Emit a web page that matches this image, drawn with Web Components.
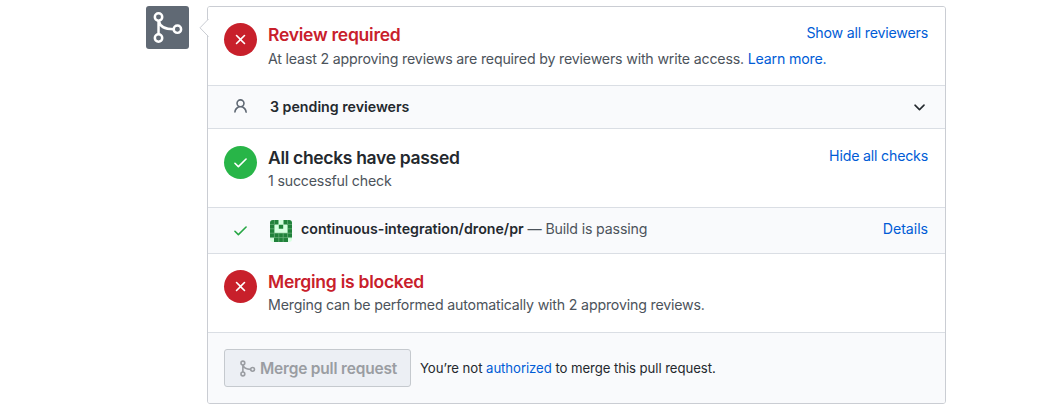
<!DOCTYPE html>
<html lang="en">
<head>
<meta charset="utf-8">
<title>Merge status</title>
<style>
body{margin:0;background:#fff;font-family:Inter,"Liberation Sans",sans-serif;color:#24292e;overflow:hidden}
</style>
</head>
<body>
<merge-page></merge-page>
<script>
const define = (name, html) => {
  const t = document.createElement('template');
  t.innerHTML = html;
  customElements.define(name, class extends HTMLElement {
    constructor() {
      super();
      this.attachShadow({mode: 'open'}).append(t.content.cloneNode(true));
    }
  });
};

const icons = {
  merge: ['0 0 16 16', '<g fill="none" stroke="currentColor" style="stroke-width:var(--stroke,1.2)"><circle cx="3.65" cy="2.9" r="1.8"/><circle cx="3.65" cy="13.1" r="1.8"/><circle cx="12.8" cy="8.8" r="1.8"/><path d="M3.65 4.7v6.600M3.750 4.700c.4 2.500 3 4.100 7.250 4.100"/></g>'],
  x: ['0 0 16 16', '<path fill="currentColor" d="M3.72 3.72a.75.75 0 011.06 0L8 6.94l3.22-3.22a.75.75 0 111.06 1.06L9.06 8l3.22 3.22a.75.75 0 11-1.06 1.06L8 9.06l-3.22 3.22a.75.75 0 01-1.06-1.06L6.94 8 3.72 4.78a.75.75 0 010-1.06z"/>'],
  check: ['0 0 16 16', '<path fill="currentColor" d="M13.78 4.22a.75.75 0 010 1.06l-7.25 7.25a.75.75 0 01-1.06 0L2.22 9.28a.75.75 0 011.06-1.06L6 10.94l6.72-6.72a.75.75 0 011.06 0z"/>'],
  person: ['0 0 16 16', '<path fill="currentColor" fill-rule="evenodd" d="M10.5 5a2.5 2.5 0 11-5 0 2.5 2.5 0 015 0zm.061 3.073a4 4 0 10-5.123 0 6.004 6.004 0 00-3.431 5.142.75.75 0 001.498.07 4.5 4.5 0 018.99 0 .75.75 0 101.498-.07 6.005 6.005 0 00-3.432-5.142z"/>'],
  chevron: ['0 0 16 16', '<path fill="currentColor" d="M12.78 6.22a.75.75 0 010 1.06l-4.25 4.25a.75.75 0 01-1.06 0L3.22 7.28a.75.75 0 011.06-1.06L8 9.94l3.72-3.72a.75.75 0 011.06 0z"/>']
};
customElements.define('oct-icon', class extends HTMLElement {
  constructor() { super(); this.attachShadow({mode: 'open'}); }
  connectedCallback() {
    const [box, art] = icons[this.getAttribute('name')];
    this.shadowRoot.innerHTML = `<style>:host{display:block;flex:none;width:17px;height:17px}svg{display:block;width:100%;height:100%}</style><svg viewBox="${box}">${art}</svg>`;
  }
});

define('app-identicon', `<style>:host{display:block;flex:none;width:22px;height:22px;border-radius:3px;overflow:hidden}svg{display:block}</style>
<svg width="22" height="22" viewBox="0 0 22 22"><rect width="22" height="22" fill="#d6ffe0"/>
<path fill="#20813a" d="M0 0h8.5v4.400H4.400v8.600h13.200V4.400h-4.100V0H22v17.600h-4V22H4v-4.400H0zM8.800 4.800h4.400v4h-4.400z"/>
<path stroke="#6fb580" stroke-width=".7" d="M4.400 0v4M17.600 0v4M0 4.400h4M18 4.400h4M0 8.800h4M18 8.800h4M0 13.200h22M0 17.600h22M4.400 13v5M8.800 13v9M13.200 13v9M17.600 13v5" fill="none"/></svg>`);

define('text-link', `<style>:host{color:#005cd6}</style><slot></slot>`);

define('status-item', `<style>
:host{display:flex;box-sizing:border-box;height:78px;padding:16px 17px 0 16px;background:#fff}
.dot{display:grid;place-items:center;flex:none;width:33px;height:33px;border-radius:50%;background:var(--dot,#c8202b);color:#fff}
.copy{margin-left:11px;flex:1;min-width:0;white-space:nowrap}
h3{margin:0;font-size:17.500px;line-height:23px;font-weight:600;color:var(--title,#c8202b);letter-spacing:var(--track,-.25px)}
p{margin:var(--gap,0) 0 0;font-size:14.200px;line-height:24px;color:#4c535b;letter-spacing:-.18px}
.action{font-size:14.200px;line-height:20px;letter-spacing:-.2px}
</style><div class="dot"><slot name="icon"></slot></div><div class="copy"><h3><slot name="title"></slot></h3><p><slot></slot></p></div><div class="action"><slot name="action"></slot></div>`);

define('detail-row', `<style>:host{display:flex;align-items:center;box-sizing:border-box;background:#f9fafc;border:solid #dadee4;border-width:1px 0;padding:0 17px 0 24px;font-size:14.200px;white-space:nowrap}
.end{margin-left:auto}</style><slot></slot><div class="end"><slot name="end"></slot></div>`);

define('merge-button', `<style>:host{display:flex;box-sizing:border-box;align-items:center;justify-content:center;width:187px;height:38px;border:1px solid #c5c9ce;border-radius:3px;background:#eceff4;color:#9a9da2;font-size:15.500px;font-weight:600;white-space:nowrap;gap:4px;letter-spacing:-.19px;padding-left:1px;--stroke:1.5}</style><oct-icon name="merge"></oct-icon><span><slot></slot></span>`);

define('merge-footer', `<style>:host{display:flex;align-items:center;box-sizing:border-box;height:71px;border-top:1px solid #dadee4;background:#f9fafc;padding:0 16px;gap:9px;font-size:13.200px;white-space:nowrap;letter-spacing:-.075px}</style><slot></slot>`);

define('merge-panel', `<style>:host{display:block;position:relative;box-sizing:border-box;width:739px;height:398px;border:1px solid #cacdd3;border-radius:3px;background:#fff}
.rows{overflow:hidden;border-radius:2px}
.tip{position:absolute;left:-9px;top:12px;display:block}</style><div class="rows"><slot></slot></div>
<svg class="tip" width="10" height="18" viewBox="0 0 10 18"><path d="M9.500 0L1 8.800L9.500 17.600" fill="#fff" stroke="#cacdd3"/></svg>`);

define('merge-page', `<style>
:host{display:flex;gap:18px;align-items:flex-start;padding:6px 0 0 146px}
.badge{display:grid;place-items:center;flex:none;width:43px;height:43px;border-radius:3px;background:#606974;color:#fff}
.badge oct-icon{width:33px;height:33px}
.pending{height:44px;padding-bottom:2px}
.check{height:47px}
.check>.muted,.check>text-link{padding-bottom:4px}
.check>text-link{display:block;letter-spacing:-.05px}
b{font-weight:600;color:#24292e;letter-spacing:0}
.muted{color:#4c535b;letter-spacing:-.16px}
</style>
<div class="badge"><oct-icon name="merge"></oct-icon></div>
<merge-panel>
<status-item style="--gap:1px"><oct-icon slot="icon" name="x"></oct-icon><span slot="title">Review required</span>At least 2 approving reviews are required by reviewers with write access. <text-link>Learn more.</text-link><text-link slot="action">Show all reviewers</text-link></status-item>
<detail-row class="pending"><oct-icon name="person" style="color:#606974"></oct-icon><b style="margin-left:21px">3 pending reviewers</b><oct-icon slot="end" name="chevron"></oct-icon></detail-row>
<status-item style="--dot:#28b548;--title:#24292e;--track:-.32px;padding-top:17px"><oct-icon slot="icon" name="check"></oct-icon><span slot="title">All checks have passed</span>1 successful check<text-link slot="action">Hide all checks</text-link></status-item>
<detail-row class="check"><oct-icon name="check" style="color:#28a745"></oct-icon><app-identicon style="margin-left:21px"></app-identicon><span class="muted" style="margin-left:9px"><b>continuous-integration/drone/pr</b> — Build is passing</span><text-link slot="end">Details</text-link></detail-row>
<status-item><oct-icon slot="icon" name="x"></oct-icon><span slot="title">Merging is blocked</span>Merging can be performed automatically with 2 approving reviews.</status-item>
<merge-footer><merge-button>Merge pull request</merge-button><span>You’re not <text-link>authorized</text-link> to merge this pull request.</span></merge-footer>
</merge-panel>`);
</script>
</body>
</html>
